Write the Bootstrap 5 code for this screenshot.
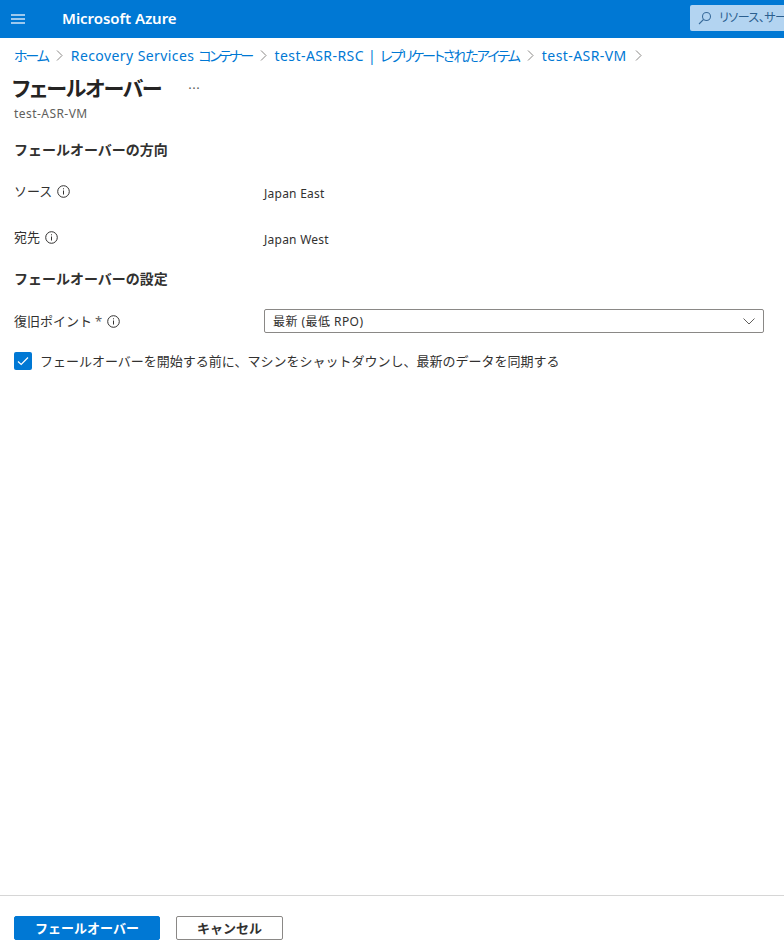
<!DOCTYPE html>
<html lang="ja">
<head>
<meta charset="utf-8">
<title>フェールオーバー</title>
<link href="https://cdn.jsdelivr.net/npm/bootstrap@5.3.0/dist/css/bootstrap.min.css" rel="stylesheet">
<style>
html,body{height:100%;overflow:hidden}
body{font-family:"Noto Sans","Noto Sans CJK JP",sans-serif;color:#323130;font-size:12px;background:#fff}
.app-shell{height:948px}
.top-bar{height:38px;background:#0078d4;color:#fff;flex:none}
.burger{width:14px;margin-left:11px;flex:none;display:block;margin-top:-1px}
.brand-name{margin-left:37px;font-size:15px;font-weight:600;line-height:36px;height:38px;flex:1;letter-spacing:-.05px}
.search-box{width:94px;height:26px;margin-top:-2px;background:#b3d4f1;border-radius:2px 0 0 2px;color:#2b5f8f;font-size:12px;white-space:nowrap;overflow:hidden;padding-left:8px;gap:7px;flex:none;font-feature-settings:"palt";letter-spacing:-.5px}
.search-box svg{flex:none}
.crumbs{padding:8px 14px 0;height:36px;font-size:14px;line-height:20px;white-space:nowrap;flex:none;letter-spacing:.42px}
.crumbs a{color:#0078d4;text-decoration:none}
.tight-kana{font-feature-settings:"palt";letter-spacing:-2.1px}
.tight-short{letter-spacing:-2.5px}
.tight-long{letter-spacing:-1.95px}
.crumb-sep{width:7px;height:11px;margin:0 8px;flex:none}
.page-title{font-size:21px;font-weight:700;line-height:28px;margin:0;color:#252423;margin-left:-2px;font-feature-settings:"palt";letter-spacing:-1.2px}
.more-dots{color:#605e5c;margin-left:27px;font-size:13px;line-height:28px;letter-spacing:.5px}
.sub-name{color:#605e5c;font-size:12px;line-height:16px;margin-top:4px;letter-spacing:.45px}
.main-area{padding:0 20px 0 14px}
.sect-head{font-size:14px;font-weight:700;line-height:20px;margin:0;color:#323130}
.field-line{display:grid;grid-template-columns:250px 1fr;align-items:start}
.field-label{font-size:13px;display:flex;align-items:center;gap:5px;line-height:18px}
.info-ic{width:13px;height:13px;flex:none}
.req{color:#605e5c;margin-left:3px}
.val-text{letter-spacing:.25px;line-height:18px}
.fake-select{height:24px;border:1px solid #8a8886;border-radius:2px;padding:1px 8px 0;font-size:12px;line-height:22px;color:#323130;letter-spacing:.45px}
.check-box{width:18px;height:18px;border-radius:2px;background:#0078d4;flex:none}
.check-text{font-size:13px;line-height:18px;margin-top:-1px}
.foot-bar{border-top:1px solid #d6d6d6;height:53px;padding:20px 14px 0;gap:16px;flex:none}
.act-btn{height:24px;font-size:13px;font-weight:600;line-height:22px;padding:0;border-radius:2px}
.act-primary{width:146px;background:#0078d4;border:1px solid #0078d4;color:#fff}
.act-second{width:107px;background:#fff;border:1px solid #8a8886;color:#323130}
.title-a{margin-top:18px}
.row-src{margin-top:22px}
.row-src .val-text{padding-top:3px}
.row-dst{margin-top:25px}
.row-dst .val-text{padding-top:3px}
.title-b{margin-top:20px}
.row-pt{margin-top:20px;align-items:center}
.row-chk{margin-top:19px}
</style>
</head>
<body>
<div class="app-shell d-flex flex-column">
  <header class="top-bar d-flex align-items-center">
    <svg class="burger" viewBox="0 0 14 10" height="10"><path d="M0 1h14M0 5h14M0 9h14" stroke="#cfe4f6" stroke-width="1.400" fill="none"/></svg>
    <div class="brand-name">Microsoft Azure</div>
    <div class="search-box d-flex align-items-center">
      <svg width="14" height="14" viewBox="0 0 14 14" fill="none" stroke="#3a6c9c" stroke-width="1.100"><circle cx="8.500" cy="5.500" r="4"/><path d="M5.500 8.500L1 13"/></svg>
      <span>リソース、サー</span>
    </div>
  </header>
  <nav class="crumbs d-flex align-items-start">
    <a href="#"><span class="tight-kana">ホーム</span></a>
    <svg class="crumb-sep mt-1" viewBox="0 0 7 11" fill="none" stroke="#8a8886" stroke-width="1"><path d="M1 .5l5 5-5 5"/></svg>
    <a href="#">Recovery Services <span class="tight-kana tight-short">コンテナー</span></a>
    <svg class="crumb-sep mt-1" viewBox="0 0 7 11" fill="none" stroke="#8a8886" stroke-width="1"><path d="M1 .5l5 5-5 5"/></svg>
    <a href="#">test-ASR-RSC | <span class="tight-kana tight-long">レプリケートされたアイテム</span></a>
    <svg class="crumb-sep mt-1" viewBox="0 0 7 11" fill="none" stroke="#8a8886" stroke-width="1"><path d="M1 .5l5 5-5 5"/></svg>
    <a href="#">test-ASR-VM</a>
    <svg class="crumb-sep mt-1" viewBox="0 0 7 11" fill="none" stroke="#8a8886" stroke-width="1"><path d="M1 .5l5 5-5 5"/></svg>
  </nav>
  <main class="main-area flex-grow-1">
    <div class="d-flex align-items-center">
      <h1 class="page-title">フェールオーバー</h1>
      <span class="more-dots">···</span>
    </div>
    <div class="sub-name">test-ASR-VM</div>
    <h2 class="sect-head title-a">フェールオーバーの方向</h2>
    <div class="field-line row-src">
      <div class="field-label">ソース
        <svg class="info-ic" viewBox="0 0 13 13" fill="none" stroke="#323130"><circle cx="6.500" cy="6.500" r="5.800"/><path d="M6.500 5.500v4M6.500 3.300v1"/></svg>
      </div>
      <div class="val-text">Japan East</div>
    </div>
    <div class="field-line row-dst">
      <div class="field-label">宛先
        <svg class="info-ic" viewBox="0 0 13 13" fill="none" stroke="#323130"><circle cx="6.500" cy="6.500" r="5.800"/><path d="M6.500 5.500v4M6.500 3.300v1"/></svg>
      </div>
      <div class="val-text">Japan West</div>
    </div>
    <h2 class="sect-head title-b">フェールオーバーの設定</h2>
    <div class="field-line row-pt">
      <div class="field-label"><span>復旧ポイント<span class="req">*</span></span>
        <svg class="info-ic" viewBox="0 0 13 13" fill="none" stroke="#323130"><circle cx="6.500" cy="6.500" r="5.800"/><path d="M6.500 5.500v4M6.500 3.300v1"/></svg>
      </div>
      <div class="fake-select d-flex align-items-center justify-content-between">
        <span>最新 (最低 RPO)</span>
        <svg width="12" height="7" viewBox="0 0 12 7" fill="none" stroke="#605e5c"><path d="M.5 .5L6 6l5.500-5.500"/></svg>
      </div>
    </div>
    <div class="d-flex align-items-center gap-2 row-chk">
      <div class="check-box d-flex align-items-center justify-content-center">
        <svg width="12" height="10" viewBox="0 0 12 10" fill="none" stroke="#fff" stroke-width="1.200"><path d="M1 5.500l3.200 3L11 1.500"/></svg>
      </div>
      <div class="check-text">フェールオーバーを開始する前に、マシンをシャットダウンし、最新のデータを同期する</div>
    </div>
  </main>
  <footer class="foot-bar d-flex align-items-start">
    <button type="button" class="btn act-btn act-primary">フェールオーバー</button>
    <button type="button" class="btn act-btn act-second">キャンセル</button>
  </footer>
</div>
<script src="https://cdn.jsdelivr.net/npm/bootstrap@5.3.0/dist/js/bootstrap.bundle.min.js"></script>
</body>
</html>
